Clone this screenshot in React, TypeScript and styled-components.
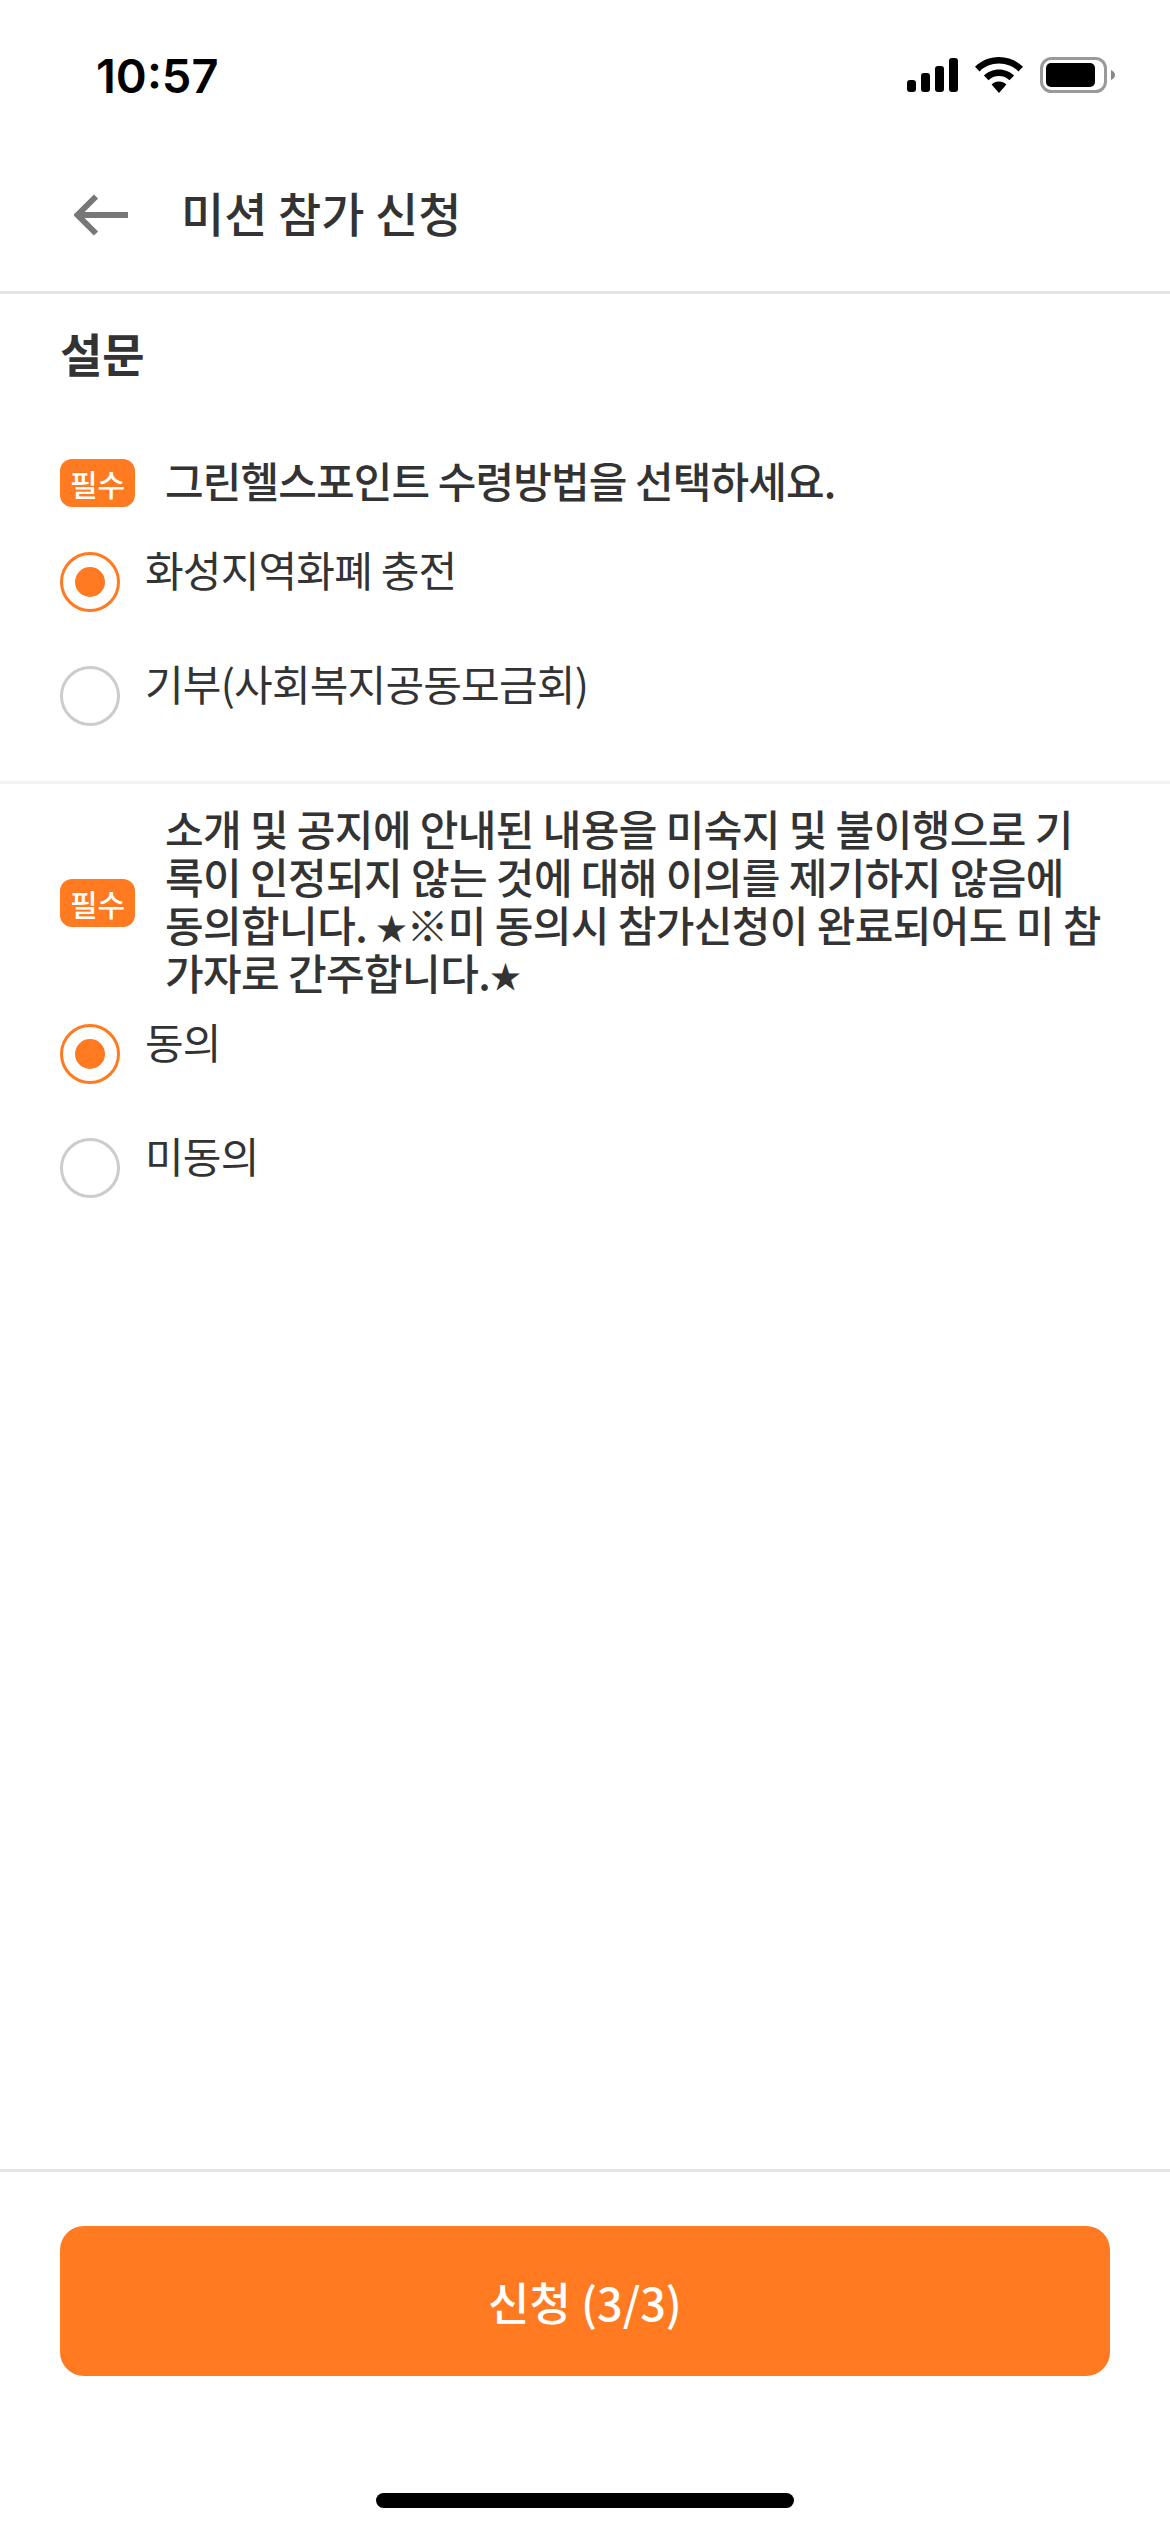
import React from "react";
import styled, {createGlobalStyle} from "styled-components";

const ORANGE = '#FF7A21'
const TEXT = '#333333'

const GlobalStyle = createGlobalStyle`
  html, body {
    margin: 0;
    padding: 0;
    background: #fff;
  }
  * {
    box-sizing: border-box;
  }
`

const Page = styled.div`
  width: 1170px;
  height: 2532px;
  display: flex;
  flex-direction: column;
  background: #fff;
  color: ${TEXT};
  font-family: "Noto Sans CJK KR", "Noto Sans", sans-serif;
`

const StatusBar = styled.div`
  height: 150px;
  padding: 0 55px 0 96px;
  display: flex;
  align-items: center;
  justify-content: space-between;
  flex-shrink: 0;
`

const Time = styled.div`
  font-family: Inter, "Liberation Sans", sans-serif;
  font-size: 47px;
  font-weight: 600;
  color: #000;
`

const StatusIcons = styled.div`
  display: flex;
  align-items: center;
  gap: 17px;
`

const Header = styled.div`
  height: 144px;
  padding: 0 0 12px 74px;
  display: flex;
  align-items: center;
  gap: 55px;
  border-bottom: 3px solid #e4e4e4;
  flex-shrink: 0;
`

const Title = styled.div`
  font-size: 47px;
  line-height: 60px;
  font-weight: 500;
  margin: -6px 0 0 -2px;
`

const Content = styled.div`
  flex: 1;
`

const SectionTitle = styled.div`
  padding: 28px 60px 0;
  font-size: 46px;
  line-height: 60px;
  font-weight: 700;
  margin-bottom: 34px;
`

const Question = styled.div`
  padding: 23px 60px 55px;
  display: flex;
  flex-direction: column;
  gap: 54px;
  & + & {
    border-top: 3px solid #f2f2f2;
  }
`

const QuestionRow = styled.div`
  min-height: 88px;
  margin-bottom: -29px;
  display: flex;
  align-items: center;
  gap: 30px;
`

const Badge = styled.span`
  width: 75px;
  height: 48px;
  border-radius: 12px;
  background: ${ORANGE};
  color: #fff;
  font-size: 30px;
  font-weight: 500;
  display: flex;
  align-items: center;
  justify-content: center;
  flex-shrink: 0;
`

const QuestionText = styled.div<{ $tracking: number }>`
  flex: 1;
  margin: -3px 0 3px;
  font-size: 42px;
  line-height: 48px;
  font-weight: 500;
  letter-spacing: ${({$tracking}) => $tracking}px;
`

const Star = styled.span`
  font-size: 31px;
  line-height: 0;
  vertical-align: 2px;
`

const Option = styled.div`
  display: flex;
  align-items: flex-start;
  gap: 25px;
`

const Radio = styled.span<{ checked?: boolean }>`
  width: 60px;
  height: 60px;
  border-radius: 50%;
  border: 3px solid ${({checked}) => (checked ? ORANGE : '#cccccc')};
  display: flex;
  align-items: center;
  justify-content: center;
  flex-shrink: 0;
  &::after {
    content: "";
    width: 30px;
    height: 30px;
    border-radius: 50%;
    background: ${({checked}) => (checked ? ORANGE : 'transparent')};
  }
`

const OptionLabel = styled.span`
  margin-top: -4px;
  font-size: 42px;
  line-height: 42px;
  font-weight: 400;
  letter-spacing: -0.8px;
`

const Footer = styled.div`
  height: 363px;
  padding: 54px 60px 24px;
  border-top: 3px solid #e4e4e4;
  display: flex;
  flex-direction: column;
  align-items: center;
  flex-shrink: 0;
`

const SubmitButton = styled.button`
  width: 100%;
  height: 150px;
  border: none;
  border-radius: 24px;
  background: ${ORANGE};
  color: #fff;
  font-family: inherit;
  font-size: 45px;
  font-weight: 500;
`

const HomeIndicator = styled.div`
  width: 418px;
  height: 15px;
  margin-top: 117px;
  border-radius: 8px;
  background: #000;
`

const SignalIcon = () => (
    <svg width="51" height="34" viewBox="0 0 51 34">
        <rect x="0" y="22" width="9" height="12" rx="3" fill="#000"/>
        <rect x="14" y="15" width="9" height="19" rx="3" fill="#000"/>
        <rect x="28" y="8" width="9" height="26" rx="3" fill="#000"/>
        <rect x="42" y="0" width="9" height="34" rx="3" fill="#000"/>
    </svg>
)

const WifiIcon = () => (
    <svg width="48" height="36" viewBox="0 0 48 36">
        <path d="M24 0C33.4 0 41.8 3.7 48 9.7L43.4 14.4C38.4 9.6 31.6 6.6 24 6.6S9.6 9.6 4.6 14.4L0 9.7C6.2 3.7 14.6 0 24 0Z" fill="#000"/>
        <path d="M24 12.4C29.9 12.4 35.2 14.7 39.1 18.5L34.5 23.2C31.8 20.6 28.1 19 24 19S16.2 20.6 13.5 23.2L8.9 18.5C12.8 14.7 18.1 12.4 24 12.4Z" fill="#000"/>
        <path d="M24 24.6C26.9 24.6 29.5 25.7 31.4 27.6L24 36L16.6 27.6C18.5 25.7 21.1 24.6 24 24.6Z" fill="#000"/>
    </svg>
)

const BatteryIcon = () => (
    <svg width="75" height="36" viewBox="0 0 75 36">
        <rect x="1.5" y="1.5" width="64" height="33" rx="10" fill="none" stroke="#999" strokeWidth="3"/>
        <rect x="6" y="6" width="49" height="24" rx="5" fill="#000"/>
        <path d="M71 13C73.5 14 75 16 75 18S73.5 22 71 23Z" fill="#888"/>
    </svg>
)

const BackArrow = () => (
    <svg width="54" height="42" viewBox="0 0 54 42">
        <path d="M54 21H4M22 2.5L3.5 21L22 39.5" fill="none" stroke="#777" strokeWidth="6"/>
    </svg>
)

const questions = [
    {
        tracking: -0.9,
        text: <>그린헬스포인트 수령방법을 선택하세요.</>,
        options: [
            {label: '화성지역화폐 충전', checked: true},
            {label: '기부(사회복지공동모금회)', checked: false},
        ],
    },
    {
        tracking: -0.6,
        text: <>소개 및 공지에 안내된 내용을 미숙지 및 불이행으로 기록이 인정되지 않는 것에 대해 이의를 제기하지 않음에 동의합니다. <Star>★</Star>※미 동의시 참가신청이 완료되어도 미 참가자로 간주합니다.<Star>★</Star></>,
        options: [
            {label: '동의', checked: true},
            {label: '미동의', checked: false},
        ],
    },
]

export default function App() {
    return (
        <Page>
            <GlobalStyle/>
            <StatusBar>
                <Time>10:57</Time>
                <StatusIcons>
                    <SignalIcon/>
                    <WifiIcon/>
                    <BatteryIcon/>
                </StatusIcons>
            </StatusBar>
            <Header>
                <BackArrow/>
                <Title>미션 참가 신청</Title>
            </Header>
            <Content>
                <SectionTitle>설문</SectionTitle>
                {questions.map((question, index) => (
                    <Question key={index}>
                        <QuestionRow>
                            <Badge>필수</Badge>
                            <QuestionText $tracking={question.tracking}>{question.text}</QuestionText>
                        </QuestionRow>
                        {question.options.map((option) => (
                            <Option key={option.label}>
                                <Radio checked={option.checked}/>
                                <OptionLabel>{option.label}</OptionLabel>
                            </Option>
                        ))}
                    </Question>
                ))}
            </Content>
            <Footer>
                <SubmitButton>신청 (3/3)</SubmitButton>
                <HomeIndicator/>
            </Footer>
        </Page>
    )
}
